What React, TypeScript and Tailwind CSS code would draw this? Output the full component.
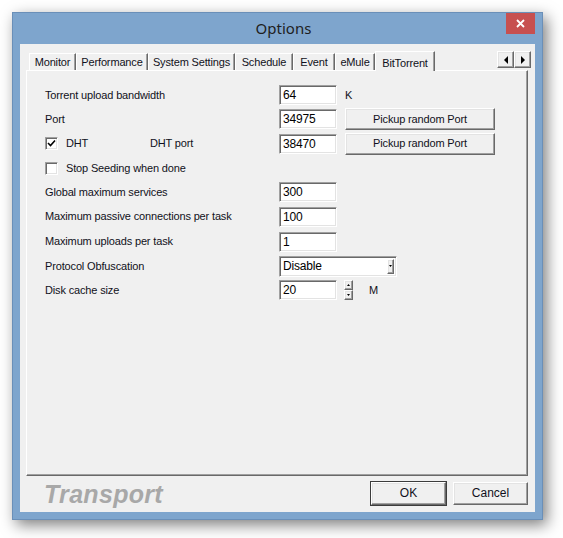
import React from "react";

const font = { fontFamily: '"Liberation Sans", Arial, sans-serif' };

const tabs = [
  { label: "Monitor", w: 47 },
  { label: "Performance", w: 72 },
  { label: "System Settings", w: 87 },
  { label: "Schedule", w: 58 },
  { label: "Event", w: 42 },
  { label: "eMule", w: 40 },
];

function TextBox({ value, w = "w-[58px]" }: { value: string; w?: string }) {
  return (
    <div
      className={`${w} h-[20px] bg-white border border-t-[#a0a0a0] border-l-[#a0a0a0] border-b-[#ffffff] border-r-[#ffffff] shadow-[inset_1px_1px_0_#696969,inset_-1px_-1px_0_#e3e3e3] pl-[3px] flex items-center text-[12px] tracking-[-0.2px] text-black`}
    >
      {value}
    </div>
  );
}

function RaisedButton({ children, className }: { children: React.ReactNode; className: string }) {
  return (
    <div
      className={`${className} bg-[#f0f0f0] border border-t-[#ffffff] border-l-[#ffffff] border-b-[#696969] border-r-[#696969] shadow-[inset_-1px_-1px_0_#a0a0a0,inset_1px_1px_0_#e3e3e3] flex items-center justify-center text-[11px] whitespace-nowrap text-[#101020]`}
    >
      {children}
    </div>
  );
}

function CheckBox({ checked }: { checked?: boolean }) {
  return (
    <div className="w-[13px] h-[13px] bg-white border border-t-[#a0a0a0] border-l-[#a0a0a0] border-b-[#ffffff] border-r-[#ffffff] shadow-[inset_1px_1px_0_#696969,inset_-1px_-1px_0_#e3e3e3] flex items-center justify-center">
      {checked && (
        <svg width="9" height="9" viewBox="0 0 9 9">
          <path d="M1 4 L3.5 6.5 L8 1.5" stroke="#000" strokeWidth="1.6" fill="none" />
        </svg>
      )}
    </div>
  );
}

function Row({ h, children }: { h: string; children: React.ReactNode }) {
  return <div className={`${h} flex items-center text-[11px] tracking-[-0.15px] text-[#101020] whitespace-nowrap`}>{children}</div>;
}

function Label({ children }: { children: React.ReactNode }) {
  return <div className="w-[234px]">{children}</div>;
}

export default function App() {
  return (
    <div className="w-[563px] h-[538px] bg-white pt-[12px] pl-[12px]" style={font}>
      <div className="w-[531px] h-[508px] bg-[#7ea5cd] border border-[#6a8fb8] shadow-[4px_5px_14px_rgba(0,0,0,0.5)] flex flex-col">
        {/* title bar */}
        <div className="h-[31px] relative flex items-center justify-center">
          <span
            className="text-[15px] text-[#1e1e1e] pl-[12px]"
            style={{ fontFamily: '"Noto Sans", "Open Sans", sans-serif' }}
          >
            Options
          </span>
          <div className="absolute right-[7px] top-0 w-[29px] h-[21px] bg-[#c75050] flex items-center justify-center">
            <svg width="9" height="9" viewBox="0 0 9 9">
              <path d="M1 1 L8 8 M8 1 L1 8" stroke="#fff" strokeWidth="1.8" />
            </svg>
          </div>
        </div>

        {/* client */}
        <div className="mx-[7px] h-[468px] bg-[#f0f0f0] flex flex-col px-[6px] pt-[6px]">
          {/* tab strip */}
          <div className="h-[20px] flex items-end text-[11px] tracking-[-0.15px] text-[#101020] whitespace-nowrap">
            <div className="w-[3px]" />
            {tabs.map((t) => (
              <div
                key={t.label}
                className="h-[17px] border-t border-l border-r border-t-[#ffffff] border-l-[#ffffff] border-r-[#696969] shadow-[inset_-1px_0_0_#a0a0a0] flex items-center justify-center pt-[1px]"
                style={{ width: t.w }}
              >
                {t.label}
              </div>
            ))}
            <div className="h-[20px] w-[60px] bg-[#f0f0f0] border-t border-l border-r border-t-[#ffffff] border-l-[#ffffff] border-r-[#696969] shadow-[inset_-1px_0_0_#a0a0a0] flex items-start pt-[3px] justify-center relative z-10 -mb-[1px]">
              BitTorrent
            </div>
            <div className="flex-1" />
            <div className="flex mb-[2px] mr-[-2px] self-end">
              <RaisedButton className="w-[17px] h-[17px]">
                <svg width="6" height="8" viewBox="0 0 6 8">
                  <path d="M5 0 L5 8 L1 4 Z" fill="#000" />
                </svg>
              </RaisedButton>
              <RaisedButton className="w-[17px] h-[17px]">
                <svg width="6" height="8" viewBox="0 0 6 8">
                  <path d="M1 0 L1 8 L5 4 Z" fill="#000" />
                </svg>
              </RaisedButton>
            </div>
          </div>

          {/* panel */}
          <div className="h-[406px] mr-[1px] border border-t-[#ffffff] border-l-[#ffffff] border-b-[#696969] border-r-[#696969] shadow-[inset_-1px_-1px_0_#a0a0a0] pl-[18px] pt-[12px]">
            <Row h="h-[24px]">
              <Label>Torrent upload bandwidth</Label>
              <TextBox value="64" />
              <span className="ml-[8px]">K</span>
            </Row>
            <Row h="h-[24px]">
              <Label>Port</Label>
              <TextBox value="34975" />
              <RaisedButton className="ml-[8px] w-[150px] h-[22px]">Pickup random Port</RaisedButton>
            </Row>
            <Row h="h-[25px]">
              <div className="w-[234px] flex items-center">
                <CheckBox checked />
                <span className="ml-[8px] w-[84px]">DHT</span>
                <span>DHT port</span>
              </div>
              <TextBox value="38470" />
              <RaisedButton className="ml-[8px] w-[150px] h-[22px]">Pickup random Port</RaisedButton>
            </Row>
            <Row h="h-[24px]">
              <div className="flex items-center">
                <CheckBox />
                <span className="ml-[8px]">Stop Seeding when done</span>
              </div>
            </Row>
            <Row h="h-[24px]">
              <Label>Global maximum services</Label>
              <TextBox value="300" />
            </Row>
            <Row h="h-[25px]">
              <Label>Maximum passive connections per task</Label>
              <TextBox value="100" />
            </Row>
            <Row h="h-[25px]">
              <Label>Maximum uploads per task</Label>
              <TextBox value="1" />
            </Row>
            <Row h="h-[24px]">
              <Label>Protocol Obfuscation</Label>
              <div className="w-[118px] h-[21px] bg-white border border-t-[#a0a0a0] border-l-[#a0a0a0] border-b-[#ffffff] border-r-[#ffffff] shadow-[inset_1px_1px_0_#696969,inset_-1px_-1px_0_#e3e3e3] flex items-center text-[12px] tracking-[-0.2px] text-black pl-[3px]">
                <span className="flex-1">Disable</span>
                <RaisedButton className="w-[7px] h-[15px] mr-[2px]">
                  <svg width="3" height="2" viewBox="0 0 3 2">
                    <path d="M0 0 L3 0 L1.5 2 Z" fill="#000" />
                  </svg>
                </RaisedButton>
              </div>
            </Row>
            <Row h="h-[24px]">
              <Label>Disk cache size</Label>
              <TextBox value="20" />
              <div className="ml-[7px] flex flex-col">
                <RaisedButton className="w-[9px] h-[10px]">
                  <svg width="3" height="2" viewBox="0 0 3 2">
                    <path d="M0 2 L3 2 L1.5 0 Z" fill="#000" />
                  </svg>
                </RaisedButton>
                <RaisedButton className="w-[9px] h-[10px]">
                  <svg width="3" height="2" viewBox="0 0 3 2">
                    <path d="M0 0 L3 0 L1.5 2 Z" fill="#000" />
                  </svg>
                </RaisedButton>
              </div>
              <span className="ml-[16px]">M</span>
            </Row>
          </div>

          {/* footer */}
          <div className="flex items-center h-[34px] pl-[18px]">
            <span className="text-[25px] italic font-bold text-[#a8a8a8] tracking-[0.3px] flex-1 pt-[3px]">
              Transport
            </span>
            <RaisedButton className="w-[75px] h-[23px] text-[12px] mr-[7px] outline outline-1 outline-[#3c3c3c]">OK</RaisedButton>
            <RaisedButton className="w-[75px] h-[23px] text-[12px] mr-[1px]">Cancel</RaisedButton>
          </div>
        </div>
      </div>
    </div>
  );
}
